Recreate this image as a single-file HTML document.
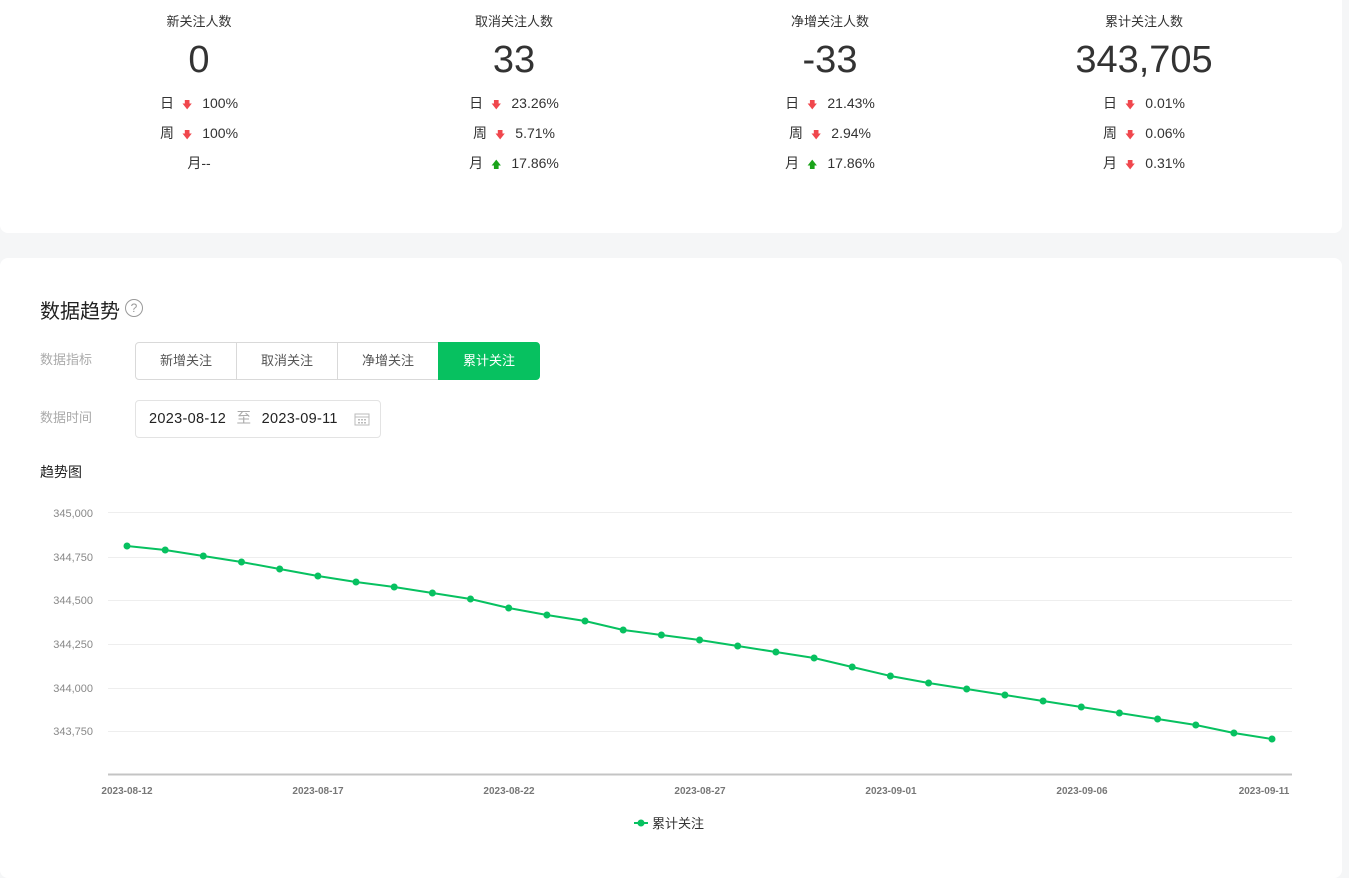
<!DOCTYPE html>
<html><head><meta charset="utf-8"><style>
*{margin:0;padding:0;box-sizing:border-box}
body{width:1349px;height:857px;background:#f5f6f7;position:relative;overflow:hidden;font-family:"Liberation Sans","Noto Sans CJK SC",sans-serif;color:#333}
.card{position:absolute;background:#fff;border-radius:8px}
.col{position:absolute;top:0;width:300px;text-align:center}
.t{position:absolute;left:0;width:300px;top:11px;font-size:13px;color:#333}
.n{position:absolute;left:0;width:300px;top:36px;font-size:38px;line-height:48px;color:#333}
.r{position:absolute;left:0;width:300px;font-size:14px;line-height:20px;color:#333}
.d{color:#f0474d;font-size:10px;margin:0 10px 0 8px}
.u{color:#1aa31a;font-size:10px;margin:0 10px 0 8px}
.abs{position:absolute}
.lbl{font-size:13px;color:#aaa}
.seg{position:absolute;top:342px;height:38px;border:1px solid #d9d9d9;font-size:13px;color:#555;text-align:center;line-height:36px}
</style></head><body>
<div class="card" style="left:0;top:-10px;width:1342px;height:243px"></div>
<div class="card" style="left:0;top:258px;width:1342px;height:620px"></div>

<div class="col" style="left:49px">
<div class="t">新关注人数</div><div class="n">0</div>
<div class="r" style="top:93px">日<span class="d">🡇</span>100%</div>
<div class="r" style="top:123px">周<span class="d">🡇</span>100%</div>
<div class="r" style="top:153px">月--</div></div>
<div class="col" style="left:364px">
<div class="t">取消关注人数</div><div class="n">33</div>
<div class="r" style="top:93px">日<span class="d">🡇</span>23.26%</div>
<div class="r" style="top:123px">周<span class="d">🡇</span>5.71%</div>
<div class="r" style="top:153px">月<span class="u">🡅</span>17.86%</div></div>
<div class="col" style="left:680px">
<div class="t">净增关注人数</div><div class="n">-33</div>
<div class="r" style="top:93px">日<span class="d">🡇</span>21.43%</div>
<div class="r" style="top:123px">周<span class="d">🡇</span>2.94%</div>
<div class="r" style="top:153px">月<span class="u">🡅</span>17.86%</div></div>
<div class="col" style="left:994px">
<div class="t">累计关注人数</div><div class="n">343,705</div>
<div class="r" style="top:93px">日<span class="d">🡇</span>0.01%</div>
<div class="r" style="top:123px">周<span class="d">🡇</span>0.06%</div>
<div class="r" style="top:153px">月<span class="d">🡇</span>0.31%</div></div>

<div class="abs" style="left:40px;top:295px;font-size:20px;color:#222">数据趋势</div>
<div class="abs" style="left:125px;top:299px;width:18px;height:18px;border:1px solid #999;border-radius:50%;font-size:12px;color:#999;text-align:center;line-height:16px">?</div>
<div class="abs lbl" style="left:40px;top:349px">数据指标</div>
<div class="seg" style="left:135px;width:102px;border-radius:4px 0 0 4px">新增关注</div>
<div class="seg" style="left:236px;width:102px">取消关注</div>
<div class="seg" style="left:337px;width:102px">净增关注</div>
<div class="seg" style="left:438px;width:102px;background:#07c160;border-color:#07c160;color:#fff;border-radius:0 4px 4px 0">累计关注</div>
<div class="abs lbl" style="left:40px;top:407px">数据时间</div>
<div class="abs" style="left:135px;top:400px;width:246px;height:38px;border:1px solid #e3e3e3;border-radius:4px;font-size:14.5px;line-height:36px;color:#222;padding-left:13px;letter-spacing:0.3px">2023-08-12 <span style="color:#aaa;margin:0 6px">至</span> 2023-09-11</div>
<svg class="abs" style="left:354px;top:412px" width="16" height="14"><rect x="1" y="2" width="14" height="11" fill="none" stroke="#bbb"/><line x1="1" y1="5" x2="15" y2="5" stroke="#bbb"/><g fill="#bbb"><rect x="4" y="7" width="2" height="1.5"/><rect x="7" y="7" width="2" height="1.5"/><rect x="10" y="7" width="2" height="1.5"/><rect x="4" y="10" width="2" height="1.5"/><rect x="7" y="10" width="2" height="1.5"/><rect x="10" y="10" width="2" height="1.5"/></g></svg>
<div class="abs" style="left:40px;top:462px;font-size:14px;color:#222">趋势图</div>

<svg class="abs" style="left:0;top:0" width="1349" height="857" font-family="Liberation Sans, sans-serif">
<g stroke="#eee" stroke-width="1">
<line x1="108" y1="512.5" x2="1292" y2="512.5"/><line x1="108" y1="557.5" x2="1292" y2="557.5"/><line x1="108" y1="600.5" x2="1292" y2="600.5"/><line x1="108" y1="644.5" x2="1292" y2="644.5"/><line x1="108" y1="688.5" x2="1292" y2="688.5"/><line x1="108" y1="731.5" x2="1292" y2="731.5"/></g>
<line x1="108" y1="774.5" x2="1292" y2="774.5" stroke="#c4c4c4" stroke-width="2"/>
<g font-size="11" fill="#888" text-anchor="end">
<text x="93" y="517">345,000</text><text x="93" y="561">344,750</text><text x="93" y="604">344,500</text><text x="93" y="648">344,250</text><text x="93" y="692">344,000</text><text x="93" y="735">343,750</text></g>
<g font-size="10" fill="#777" text-anchor="middle" font-weight="bold">
<text x="127" y="794">2023-08-12</text><text x="318" y="794">2023-08-17</text><text x="509" y="794">2023-08-22</text><text x="700" y="794">2023-08-27</text><text x="891" y="794">2023-09-01</text><text x="1082" y="794">2023-09-06</text><text x="1264" y="794">2023-09-11</text></g>
<polyline fill="none" stroke="#07c160" stroke-width="2" points="127,546 165.2,550 203.3,556 241.5,562 279.7,569 317.9,576 356,582 394.2,587 432.4,593 470.5,599 508.7,608 546.9,615 585,621 623.2,630 661.4,635 699.6,640 737.7,646 775.9,652 814.1,658 852.2,667 890.4,676 928.6,683 966.7,689 1004.9,695 1043.1,701 1081.3,707 1119.4,713 1157.6,719 1195.8,725 1233.9,733 1272,739"/>
<g fill="#07c160">
<circle cx="127" cy="546" r="3.5"/><circle cx="165.2" cy="550" r="3.5"/><circle cx="203.3" cy="556" r="3.5"/><circle cx="241.5" cy="562" r="3.5"/><circle cx="279.7" cy="569" r="3.5"/><circle cx="317.9" cy="576" r="3.5"/><circle cx="356" cy="582" r="3.5"/><circle cx="394.2" cy="587" r="3.5"/><circle cx="432.4" cy="593" r="3.5"/><circle cx="470.5" cy="599" r="3.5"/><circle cx="508.7" cy="608" r="3.5"/><circle cx="546.9" cy="615" r="3.5"/><circle cx="585" cy="621" r="3.5"/><circle cx="623.2" cy="630" r="3.5"/><circle cx="661.4" cy="635" r="3.5"/><circle cx="699.6" cy="640" r="3.5"/><circle cx="737.7" cy="646" r="3.5"/><circle cx="775.9" cy="652" r="3.5"/><circle cx="814.1" cy="658" r="3.5"/><circle cx="852.2" cy="667" r="3.5"/><circle cx="890.4" cy="676" r="3.5"/><circle cx="928.6" cy="683" r="3.5"/><circle cx="966.7" cy="689" r="3.5"/><circle cx="1004.9" cy="695" r="3.5"/><circle cx="1043.1" cy="701" r="3.5"/><circle cx="1081.3" cy="707" r="3.5"/><circle cx="1119.4" cy="713" r="3.5"/><circle cx="1157.6" cy="719" r="3.5"/><circle cx="1195.8" cy="725" r="3.5"/><circle cx="1233.9" cy="733" r="3.5"/><circle cx="1272" cy="739" r="3.5"/></g>
<line x1="634" y1="823" x2="648" y2="823" stroke="#07c160" stroke-width="2"/><circle cx="641" cy="823" r="3.5" fill="#07c160"/>
<text x="652" y="828" font-size="13" fill="#333" font-family="Liberation Sans, Noto Sans CJK SC, sans-serif">累计关注</text>
</svg>
</body></html>
